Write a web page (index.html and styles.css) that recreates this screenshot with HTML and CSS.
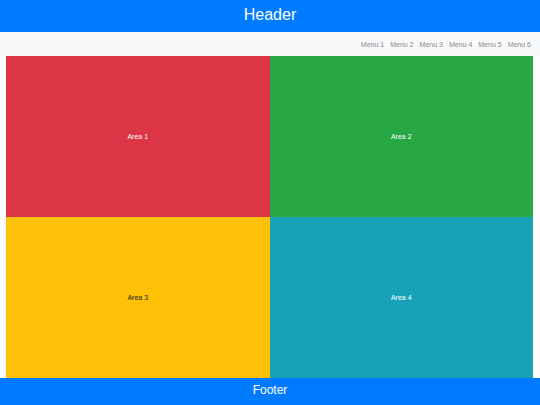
FILE: index.html
```html
<!DOCTYPE html>
<html>
<head>
<meta charset="utf-8">
<link rel="stylesheet" href="styles.css">
</head>
<body>
<div class="page">
  <header class="header">Header</header>
  <nav class="nav">
    <ul class="menu">
      <li>Menu 1</li>
      <li>Menu 2</li>
      <li>Menu 3</li>
      <li>Menu 4</li>
      <li>Menu 5</li>
      <li>Menu 6</li>
    </ul>
  </nav>
  <main class="main">
    <div class="grid">
      <div class="area area-red">Area 1</div>
      <div class="area area-green">Area 2</div>
      <div class="area area-yellow">Area 3</div>
      <div class="area area-teal">Area 4</div>
    </div>
  </main>
  <footer class="footer">Footer</footer>
</div>
</body>
</html>
```

FILE: styles.css
```css
* { box-sizing: border-box; }
html, body { margin: 0; padding: 0; }
body {
  font-family: "Liberation Sans", Arial, sans-serif;
  background: #ffffff;
  width: 540px;
  height: 405px;
  overflow: hidden;
}
.page {
  display: flex;
  flex-direction: column;
  height: 405px;
}
.header {
  height: 32px;
  background: #007bff;
  color: #ffffff;
  font-size: 16px;
  display: flex;
  align-items: center;
  justify-content: center;
  padding-bottom: 2px;
}
.nav {
  height: 24px;
  background: #f8f9fa;
  display: flex;
  align-items: center;
  justify-content: flex-end;
  padding-right: 9px;
}
.menu {
  list-style: none;
  margin: 0;
  padding: 0;
  display: flex;
  gap: 6px;
  font-size: 7px;
  color: #8a8a8a;
}
.main {
  flex: 1;
  padding: 0 7px 0 6px;
  display: flex;
}
.grid {
  flex: 1;
  display: grid;
  grid-template-columns: 1fr 1fr;
  grid-template-rows: 1fr 1fr;
}
.area {
  display: flex;
  align-items: center;
  justify-content: center;
  font-size: 7px;
  color: #ffffff;
}
.area-red { background: #dc3545; }
.area-green { background: #28a745; }
.area-yellow { background: #ffc107; color: #212529; }
.area-teal { background: #17a2b8; }
.footer {
  height: 27px;
  background: #007bff;
  color: #ffffff;
  font-size: 12px;
  display: flex;
  align-items: center;
  justify-content: center;
  padding-bottom: 3px;
}
```
